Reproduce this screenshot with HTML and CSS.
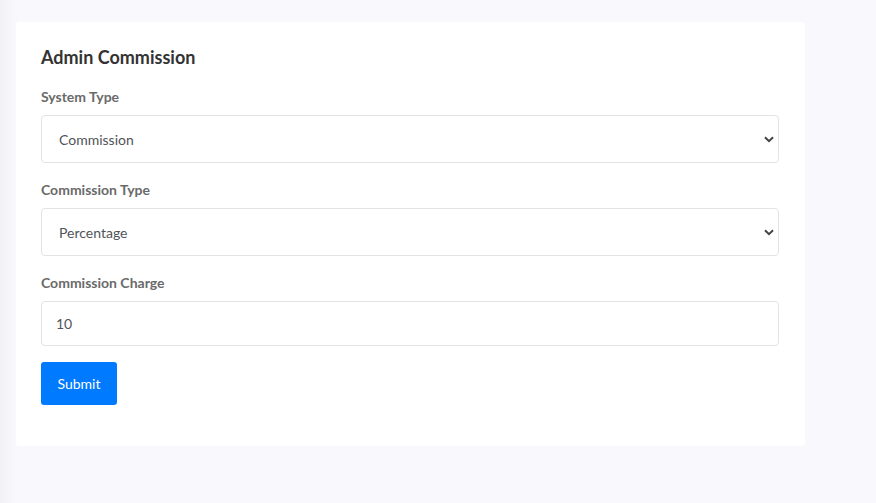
FILE: index.html
```html
<!DOCTYPE html>
<html lang="en">
<head>
    <meta charset="UTF-8">
    <meta name="viewport" content="width=device-width, initial-scale=1.0">
    <title>Admin Commission</title>
    <link rel="stylesheet" href="styles.css">
</head>
<body>
    <div class="card">
        <h4 class="card-title">Admin Commission</h4>
        <form>
            <div class="form-group">
                <label for="systemType">System Type</label>
                <select id="systemType" class="form-control">
                    <option>Commission</option>
                    <option>Subscription</option>
                </select>
            </div>
            <div class="form-group">
                <label for="commissionType">Commission Type</label>
                <select id="commissionType" class="form-control">
                    <option>Percentage</option>
                    <option>Fixed</option>
                </select>
            </div>
            <div class="form-group">
                <label for="commissionCharge">Commission Charge</label>
                <input type="text" id="commissionCharge" class="form-control input" value="10">
            </div>
            <div class="form-group">
                <button type="submit" class="btn">Submit</button>
            </div>
        </form>
    </div>
</body>
</html>
```

FILE: styles.css
```css
body {
    margin: 0;
    min-height: 503px;
    background: linear-gradient(to right, #f1f1f6 0, #f6f6fb 12px, #f8f8fd 18px);
    font-family: Lato, "Open Sans", sans-serif;
    padding: 22px 0 0 16px;
    box-sizing: border-box;
}
.card {
    width: 789px;
    box-sizing: border-box;
    background-color: #fff;
    border-radius: 3px;
    padding: 25px 26px 25px 25px;
}
.card-title {
    margin: 0 0 19px;
    font-size: 18px;
    line-height: 20px;
    font-weight: 700;
    color: #333;
}
.form-group {
    margin-bottom: 16px;
}
.form-group label {
    display: block;
    font-size: 14px;
    line-height: 21px;
    font-weight: 700;
    color: #6a6a6a;
    margin-bottom: 8px;
}
.form-control {
    display: block;
    width: 100%;
    box-sizing: border-box;
    height: 48px;
    border: 1px solid #e3e3e3;
    border-radius: 4px;
    background-color: #fff;
    font-family: Lato, "Open Sans", sans-serif;
    font-size: 14px;
    color: #4f5459;
    padding: 0 17px;
    outline: none;
}
select.form-control {
    -webkit-appearance: none;
    appearance: none;
    background-image: url("data:image/svg+xml,%3Csvg xmlns='http://www.w3.org/2000/svg' width='10' height='7' viewBox='0 0 10 7'%3E%3Cpath d='M1 1.2l4 4 4-4' fill='none' stroke='%23444' stroke-width='2'/%3E%3C/svg%3E");
    background-repeat: no-repeat;
    background-position: right 4px center;
    background-size: 10px 7px;
}
.input {
    height: 45px;
    padding: 0 14px;
}
.btn {
    display: block;
    width: 76px;
    height: 43px;
    border: none;
    border-radius: 3px;
    background-color: #007bff;
    color: #fff;
    font-family: Lato, "Open Sans", sans-serif;
    font-size: 14px;
    cursor: pointer;
}
```
